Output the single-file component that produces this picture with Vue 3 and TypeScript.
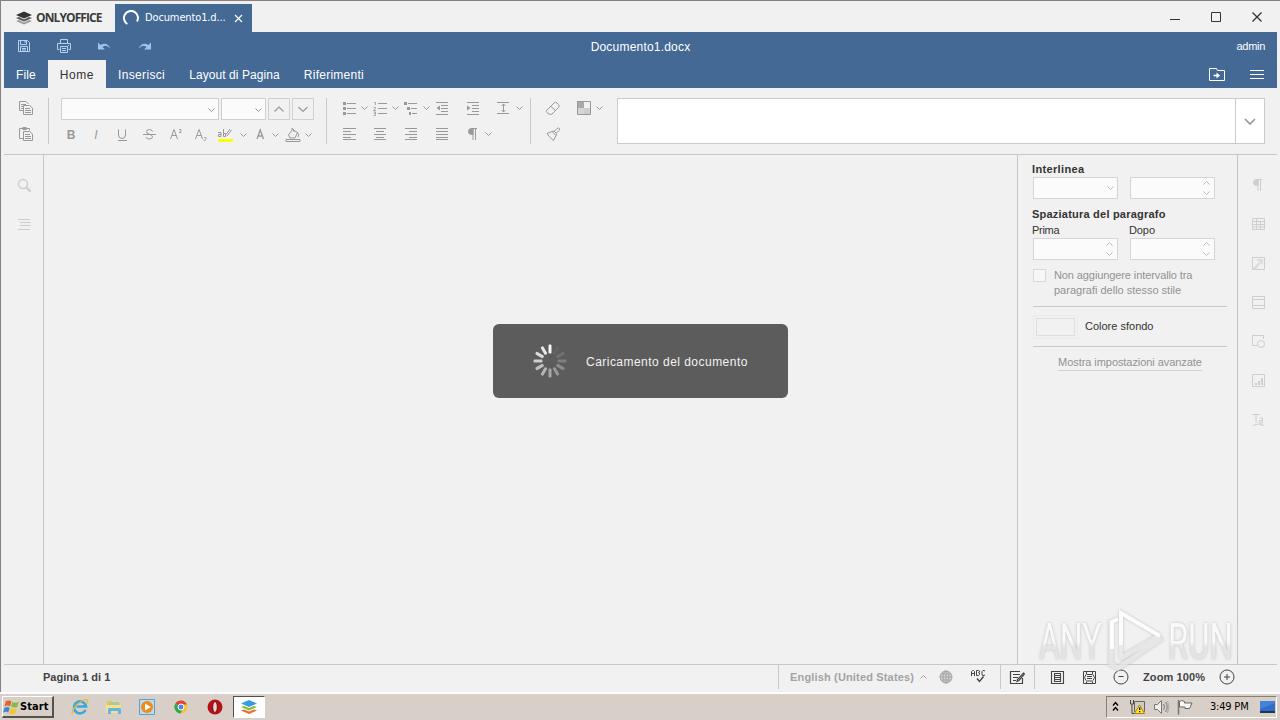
<script setup lang="ts">
import { h } from 'vue'

const lines = (y: number[], x1: number[], x2: number[]) =>
  y.map((v, i) => `<path d="M${x1[i]} ${v}.5H${x2[i]}"/>`).join('')

const icons: Record<string, string> = {
  copy: '<path d="M5.500 10.500H1.500V1.500H8l2.500 2.500M3 4.500h5M3 6.500h2M3 8.500h2"/><path d="M5.500 5.500h6l3 2.500v6.500h-9z" fill="#f1f1f1"/><path d="M7 8.500h5M7 10.500h6M7 12.500h6"/>',
  paste: '<path d="M5.500 12.500H1.500V2.500h10v2"/><path d="M4 2.500h5M4.500 1.500h4M4.500 3.500h4"/><path d="M5.500 5.500h6l3 2.500v6.500h-9z" fill="#f1f1f1"/><path d="M7 8.500h5M7 10.500h6M7 12.500h6"/>',
  bullets: lines([3, 8, 13], [6, 6, 6], [15, 15, 15]) + '<path d="M2 2h3v3H2zM2 7h3v3H2zM2 12h3v3H2z" fill="currentColor" stroke="none"/>',
  numbers: lines([3, 8, 13], [6, 6, 6], [15, 15, 15]) + '<g stroke-width=".8"><path d="M2 2.500h1.500V5M1.500 7.500H3.500v1L1.500 10.500H4M1.500 12h2v3.500h-2M2 13.500h1"/></g>',
  multi: lines([3, 8, 13], [5, 8, 9], [14, 14, 14]) + '<path d="M1 2h3v3H1zM4 7h3v3H4zM6 12h2v3H6z" fill="currentColor" stroke="none"/>',
  outdent: lines([2, 5, 8, 11, 14], [2, 7, 7, 7, 2], [14, 14, 14, 14, 14]) + '<path d="M6 5.500v5L2.500 8z" fill="currentColor" stroke="none"/>',
  indent: lines([2, 5, 8, 11, 14], [2, 7, 7, 7, 2], [14, 14, 14, 14, 14]) + '<path d="M2 5.500v5L5.500 8z" fill="currentColor" stroke="none"/>',
  spacing: '<path d="M2 2.500h12M2 13.500h12M8.500 4v8M6.500 6l2-2 2 2M6.500 10l2 2 2-2"/>',
  left: lines([2, 5, 8, 11, 13], [2, 2, 2, 2, 2], [15, 10, 15, 10, 15]),
  center: lines([2, 5, 8, 11, 13], [2, 4, 2, 4, 2], [14, 12, 14, 12, 14]),
  right: lines([2, 5, 8, 11, 13], [2, 6, 2, 6, 2], [14, 14, 14, 14, 14]),
  justify: lines([2, 5, 8, 11, 13], [2, 2, 2, 2, 2], [14, 14, 14, 14, 14]),
  para: '<path d="M8 3v11M10.500 3v11M6 2.500h6"/><path d="M8 2.500H6.500a3 3 0 0 0 0 6H8z" fill="currentColor"/>',
  eraser: '<path d="M1.500 10.500 9 3q1.500-1.500 3 0l1.500 1.500q1.500 1.500 0 3L7 14q-1.500 1-3 0l-2-1.500q-1-1-.5-2zM6 6.500l4.500 4"/>',
  pattern: '<path d="M1.500 1.500h13v13h-13z"/><path d="M1 1h7v7H1z" fill="currentColor" stroke="none" opacity=".8"/><path d="M8 8h6v6H8z" fill="currentColor" stroke="none" opacity=".4"/><path d="M2 8h6v6H2z" fill="currentColor" stroke="none" opacity=".3"/>',
  brush: '<path d="m2 7.500 5-2 4 4-2.500 5q-4-3-6.500-7zM7 5.500l2-.5 2.500 2.500-.5 2M9.500 5l2-2q2-2 3-.500t-1 2.500l-2 2"/>',
  under: '<path d="M4.500 2.500V8q0 3.500 3.500 3.500T11.500 8V2.500M4 13.500h9"/>',
  strike: '<path d="M11.500 4.500Q11 2.500 8.500 2.500 5.500 2.500 5.500 4.500 5.500 6.500 8 7q3.500 1 3.500 3 0 2-3.500 2-2.500 0-3-2M2 7.500h13"/>',
  sup: '<path d="m2.500 12 3.500-9.500L9.500 12M4 8.500h4.500"/><path d="M11 2.500h2v1.500l-2 1.500h2.500" stroke-width=".8"/>',
  sub: '<path d="m2.500 12 3.500-9.500L9.500 12M4 8.500h4.500"/><path d="M11 10.500h2v1.500l-1 1.500h-1.500" stroke-width=".8"/>',
  marker: '<path d="M2 5.500h3v4H2.500v-2H5M7.500 2v7.500h2v-3h-2M15.500 3 11 9M14 2l-4 5.500"/><path d="M2 12h15v3H2z" fill="#ff0" stroke="none"/>',
  fontA: '<path d="m5 12 3.200-9L11.500 12M6 9h4.500" stroke-width="1.300"/>',
  fill: '<path d="m3.500 8 4-5.500 5 3L10 11H5zM6 2q3-1.500 3 3M12 5q3 2 1 5"/><path d="M1 12.500h14v2H1z"/>',
  down: '<path d="m.5 1.500 3 3 3-3"/>',
  up: '<path d="m.5 4.500 3-3 3 3"/>',
  bigdown: '<path d="m1 1 5 5 5-5" stroke-width="1.700"/>',
  thindown: '<path d="m1.500 1 4.500 4.500L10.500 1" stroke-width="1.200"/>',
  thinup: '<path d="M1.500 5.500 6 1l4.500 4.500" stroke-width="1.200"/>',
  search: '<circle cx="7" cy="7" r="4.500" stroke-width="1.500"/><path d="m10.500 10.500 4 4" stroke-width="2.400"/>',
  nav: lines([3, 6, 9, 13], [2, 4, 4, 2], [14, 15, 15, 14]),
  save: '<path d="M2.500 2.500h9l2 2v9h-11zM4.500 2.500v4h6v-4M9 3v2M4.500 13V8.500h7V13M6 10.500h4M6 12h4"/>',
  print: '<path d="M4.500 5.500v-4h7v4M3.500 11.500h-2v-6h13v6h-2M4.500 8.500h7v6h-7zM6 10.500h4M6 12.500h4M12 7.500h1"/>',
  undo: '<path d="M2 4.500v7h7L6.500 9Q10 6 14.500 10.500 11 3.500 4.500 7z" fill="currentColor" stroke="none"/>',
  redo: '<path d="M15 4.500v7H8l2.500-2.500Q7 6 2.500 10.500 6 3.500 12.500 7z" fill="currentColor" stroke="none"/>',
  folder: '<path d="M1.500 2.500h7l1 2h7v10h-15z"/><path d="M5.500 9.500H9" stroke-width="1.600"/><path d="m8.500 6.500 3.500 3-3.500 3z" fill="currentColor" stroke="none"/>',
  menu: '<path d="M1 4.500h14M1 8.500h14M1 12.500h14"/>',
  table: '<path d="M2.500 2.500h12v11h-12zM3 5.500h11M3 8.500h11M3 11h11M6.500 3v10M10.500 6v7"/>',
  image: '<path d="M2.500 2.500h12v12h-12z"/><path d="m3 13 7-7H7V4h6v6l-2-2-5 6H3z" fill="currentColor" stroke="none" opacity=".6"/>',
  header: '<path d="M2.500 2.500h12v12h-12zM3 5.500h11M3 11.500h11"/>',
  shape: '<path d="M7 12.500H2.500v-10h11V6"/><circle cx="11" cy="11" r="3.500"/>',
  chart: '<path d="M2.500 2.500h12v12h-12z" /><path d="M5 11h2v2H5zM8 9h2v4H8zM11 6h2v7h-2z" fill="currentColor" stroke="none"/>',
  textart: '<path d="M2 3.500h8M6 4v8M9.500 7h3v5h-3V9.500h3M3 14.500q5-3 11 0"/>',
  globe: '<circle cx="8" cy="8" r="6" fill="currentColor" fill-opacity=".35"/><ellipse cx="8" cy="8" rx="3" ry="6"/><path d="M8 2v12M2 8h12M3 5h10M3 11h10"/>',
  spell: '<path d="M1.500 7V2.500l1-1h1l1 1V7M2 4.500h2M6.500 1.500v5h2l1-1V4l-1-.5 1-.5V2l-1-.500zM15 2l-1-.5h-1l-1 1V6l1 .5h1L15 6" stroke-width="1"/><path d="m7 9.500 2.500 3 4-5" stroke-width="1.400"/>',
  track: '<path d="M11 2.500H1.500v12h12V9M4 5.500h7M4 8.500h5M4 11.500h3M14.500 4l1 1L10 11.500l-2 1 .5-2z" stroke-width="1.200"/>',
  page: '<path d="M2.500 2.500h12v12h-12zM5.500 4.500h6v8h-6zM6 6.500h5M6 8.500h5M6 10.500h5" stroke-width="1.100"/>',
  width: '<path d="M2.500 2.500h12v12h-12zM5.500 5V2.500M11.500 5V2.500M5.500 15v-2.500M11.500 15v-2.500M5.500 5.500h6M5.500 12h6M6 7.500h5M6 9.500h5M5 5.500l-1.500 3 1.500 3M12 5.500l1.500 3-1.500 3" stroke-width="1"/>',
  minus: '<circle cx="8" cy="8" r="7"/><path d="M5.500 7.500h5"/>',
  plus: '<circle cx="8" cy="8" r="7"/><path d="M5 8h6M8 5v6"/>',
  logo: '<path d="m0 5 8-3.500 8 3.500-8 3.500z" fill="#333" stroke="none"/><path d="m0 8 3-1 5 2.500 5-2.500 3 1-8 3.500z" fill="#555" stroke="none"/><path d="m0 11 3-1 5 2.500 5-2.500 3 1-8 3.500z" fill="#999" stroke="none"/>',
  office: '<path d="m0 11.500 3-1 5 2 5-2 3 1-8 3.500z" fill="#f06a2c" stroke="none"/><path d="m0 8 3-1 5 2 5-2 3 1-8 3.500z" fill="#7fc03a" stroke="none"/><path d="m0 4.500L8 1l8 3.500L8 8z" fill="#3a9be2" stroke="none"/>',
  ring: '<path d="M4.400 14A7 7 0 1 1 14 11.500" stroke-width="2"/>',
  close: '<path d="m1 1 7 7M8 1 1 8" stroke-width="1.200"/>',
}

const Ico = (p: { n: string; w?: number; h?: number }) => {
  const w = p.w ?? 16
  const ht = p.h ?? 16
  return h('svg', { width: w, height: ht, viewBox: `0 0 ${w} ${ht}`, fill: 'none', stroke: 'currentColor', innerHTML: icons[p.n] })
}
Ico.props = ['n', 'w', 'h']

const tabs = ['File', 'Home', 'Inserisci', 'Layout di Pagina', 'Riferimenti']
const sideIcons = ['para', 'table', 'image', 'header', 'shape', 'chart', 'textart']
const spokes = Array.from({ length: 12 }, (_, i) => ({ angle: -i * 30, opacity: Math.max(0.04, 0.95 - i * 0.082) }))
</script>

<template>
  <div class="screen">
    <div class="window">
      <header class="titlebar">
        <div class="brand"><Ico n="logo" /><span>ONLYOFFICE</span></div>
        <div class="doctab"><Ico n="ring" /><span>Documento1.d...</span><Ico n="close" :w="9" :h="9" /></div>
        <svg class="winbtns" width="98" height="16" viewBox="0 0 98 16" fill="none" stroke="#333">
          <path d="M0 10.500h10" /><path d="M41.500 3.500h9v9h-9z" /><path d="m82.500 3.500 9 9m0-9-9 9" stroke-width="1.300" />
        </svg>
      </header>
      <div class="blue">
        <div class="quick">
          <div class="quickicons"><Ico n="save" /><Ico n="print" /><Ico n="undo" /><Ico n="redo" /></div>
          <span class="docname">Documento1.docx</span>
          <span class="admin">admin</span>
        </div>
        <nav class="tabs">
          <span v-for="t in tabs" :key="t" :class="{ active: t === 'Home' }">{{ t }}</span>
          <div class="tabtools"><Ico n="folder" :w="18" /><Ico n="menu" /></div>
        </nav>
      </div>
      <div class="toolbar">
        <div class="clip"><Ico n="copy" /><Ico n="paste" /></div>
        <i class="sep"></i>
        <div class="fontgroup">
          <div class="fontrow">
            <div class="combo name"><Ico n="down" :w="7" :h="6" /></div>
            <div class="combo size"><Ico n="down" :w="7" :h="6" /></div>
            <div class="sq"><Ico n="thinup" :w="12" :h="7" /></div>
            <div class="sq"><Ico n="thindown" :w="12" :h="7" /></div>
          </div>
          <div class="formatrow">
            <b class="glyph">B</b><em class="glyph">I</em><Ico n="under" /><Ico n="strike" /><Ico n="sup" /><Ico n="sub" />
            <Ico n="marker" :w="18" /><Ico n="down" :w="7" :h="6" /><Ico n="fontA" /><Ico n="down" :w="7" :h="6" /><Ico n="fill" /><Ico n="down" :w="7" :h="6" />
          </div>
        </div>
        <i class="sep"></i>
        <div class="paragroup">
          <div class="listrow">
            <Ico n="bullets" /><Ico n="down" :w="7" :h="6" /><Ico n="numbers" /><Ico n="down" :w="7" :h="6" /><Ico n="multi" /><Ico n="down" :w="7" :h="6" />
            <Ico n="outdent" /><Ico n="indent" /><Ico n="spacing" /><Ico n="down" :w="7" :h="6" />
          </div>
          <div class="alignrow">
            <Ico n="left" /><Ico n="center" /><Ico n="right" /><Ico n="justify" /><Ico n="para" /><Ico n="down" :w="7" :h="6" />
          </div>
        </div>
        <i class="sep"></i>
        <div class="clear">
          <Ico n="eraser" /><Ico n="pattern" /><Ico n="down" :w="7" :h="6" /><Ico n="brush" />
        </div>
        <div class="gallery"><div class="more"><Ico n="bigdown" :w="12" :h="7" /></div></div>
      </div>
      <main class="body">
        <aside class="leftbar"><Ico n="search" /><Ico n="nav" /></aside>
        <section class="canvas">
          <div class="loader">
            <svg width="34" height="34" viewBox="-17 -17 34 34">
              <rect v-for="s in spokes" :key="s.angle" x="-1.500" y="-16.500" width="3" height="9" rx="1.200" fill="#fff" :opacity="s.opacity" :transform="`rotate(${s.angle})`" />
            </svg>
            <span>Caricamento del documento</span>
          </div>
        </section>
        <aside class="settings">
          <h4 class="first">Interlinea</h4>
          <div class="pair">
            <div class="field"><Ico n="down" :w="7" :h="6" /></div>
            <div class="field spin"><Ico n="up" :w="7" :h="6" /><Ico n="down" :w="7" :h="6" /></div>
          </div>
          <h4 class="second">Spaziatura del paragrafo</h4>
          <div class="labels"><span>Prima</span><span>Dopo</span></div>
          <div class="pair">
            <div class="field spin"><Ico n="up" :w="7" :h="6" /><Ico n="down" :w="7" :h="6" /></div>
            <div class="field spin"><Ico n="up" :w="7" :h="6" /><Ico n="down" :w="7" :h="6" /></div>
          </div>
          <div class="check"><i></i><p><span>Non aggiungere intervallo tra</span><br /><span>paragrafi dello stesso stile</span></p></div>
          <div class="color"><div class="swatch"><i></i></div><span>Colore sfondo</span></div>
          <div class="advanced"><span>Mostra impostazioni avanzate</span></div>
        </aside>
        <aside class="rightbar"><Ico v-for="s in sideIcons" :key="s" :n="s" /></aside>
      </main>
      <footer class="status">
        <span class="pages">Pagina 1 di 1</span>
        <div class="lang"><span>English (United States)</span><Ico n="up" :w="7" :h="6" /><Ico n="globe" /><Ico n="spell" /></div>
        <div class="zoom"><Ico n="track" /><i></i><Ico n="page" /><Ico n="width" /><Ico n="minus" /><span>Zoom 100%</span><Ico n="plus" /></div>
      </footer>
    </div>

    <div class="taskbar">
      <div class="start">
        <svg width="18" height="18" viewBox="0 0 18 18">
          <path d="M3 3q3-2 6 0L7.500 8.500q-3-2-6 0z" fill="#e8632c" /><path d="M10 3.500q3 2 7 0L15 9q-3 1.500-6.500-.5z" fill="#8bbd3d" />
          <path d="M1.500 10q3-2 5.500 0L5.500 15q-2-2-5.500 0z" fill="#3c87d0" /><path d="M8 10.500q3 2 6.500 0L13 16q-3 1.500-6.500-.5z" fill="#f3c52c" />
        </svg>
        <span>Start</span>
      </div>
      <div class="launch">
        <svg width="18" height="18" viewBox="0 0 18 18" fill="none">
          <path d="M14.500 12A6 6 0 1 1 15 8.500H5.500" stroke="#3ba7df" stroke-width="2.600" /><path d="M2 16Q-1 14 6 7t10.500-5q1 1-1 4" stroke="#e7b93c" stroke-width="1.300" />
        </svg>
        <svg width="18" height="18" viewBox="0 0 18 18">
          <path d="M2 3h5l1 2h7v10H2z" fill="#e9c65b" /><path d="M4 4h10v3H4z" fill="#a9cf8d" /><path d="M1 7h15v8H1z" fill="#f7df8d" /><path d="M3 16v-5q0-1 1-1h11q1 0 1 1v5h-3v-3H6v3z" fill="#63b7e8" />
        </svg>
        <svg width="18" height="18" viewBox="0 0 18 18">
          <path d="M1.500 1.500h15v15h-15z" fill="#b7dcf6" stroke="#5c9fd3" /><circle cx="9" cy="9" r="6" fill="#f18a16" /><path d="m7 5.500 6 3.500-6 3.500z" fill="#fff" />
        </svg>
        <svg width="18" height="18" viewBox="0 0 18 18">
          <circle cx="9" cy="9" r="6.500" fill="#f6c528" /><path d="M9 9 3.200 5.700A6.600 6.600 0 0 1 15 6.500H9z" fill="#e34334" /><path d="M3.200 5.700A6.600 6.600 0 0 0 8.500 15.500L11 10z" fill="#31a553" /><circle cx="9" cy="9" r="3" fill="#4789ed" stroke="#fff" />
        </svg>
        <svg width="18" height="18" viewBox="0 0 18 18">
          <circle cx="9" cy="9" r="7.500" fill="#b51218" /><ellipse cx="9" cy="9" rx="2.300" ry="5.500" fill="#e9d8d4" stroke="#7e090d" />
        </svg>
      </div>
      <div class="running"><Ico n="office" /></div>
      <div class="tray">
        <svg class="arrows" width="8" height="12" viewBox="0 0 8 12" fill="none" stroke="#000" stroke-width="1.300"><path d="m1 4.500 2.500-3 2.500 3M1 9.500l2.500-3 2.500 3" /></svg>
        <svg width="18" height="16" viewBox="0 0 18 16">
          <path d="M5.500 2.500h10v10h-10z" fill="#cfcbc2" stroke="#666" /><path d="M1.500 1v4h3V1M3 5v9.500h6" fill="none" stroke="#444" /><path d="m10.500 6 5 8.500h-10z" fill="#ffe23b" stroke="#a98700" /><path d="M10 8.500h1.300v2.500H10zM10 12h1.300v1.300H10z" fill="#111" />
        </svg>
        <svg width="18" height="16" viewBox="0 0 18 16" fill="none" stroke="#777">
          <path d="M1.500 5.500h3l4-4v13l-4-4h-3z" fill="#eee" /><path d="M10.500 5q2 3 0 6M12.500 3q3.500 5 0 10" /><path d="M14.500 2q3 6 0 12" stroke="#aaa" />
        </svg>
        <svg width="18" height="16" viewBox="0 0 18 16" stroke="#666"><path d="M2.500 2.500q2-2 5 0V4h7.500l-2.500 5.500H8V8H2.500z" fill="#f8f8f8" /><path d="M1.500 1v14.500" stroke="#777" stroke-width="1.500" /></svg>
        <span>3:49 PM</span>
        <svg class="desk" width="17" height="16" viewBox="0 0 17 16"><path d="M1 2h15v10H1z" fill="#2f6fc8" /><path d="M1 2h15v2L1 10z" fill="#4583d6" /><path d="M1 12h15v2H1z" fill="#24354e" /></svg>
      </div>
    </div>

    <svg class="watermark" width="230" height="76" viewBox="0 0 230 76">
      <defs>
        <linearGradient id="wm" x1="0" y1="0" x2="0" y2="1"><stop offset=".5" stop-color="#fbfbfb" /><stop offset=".6" stop-color="#e2e2e2" /></linearGradient>
      </defs>
      <g class="mark">
        <text transform="translate(9 56) scale(.64 1)">ANY</text>
        <text transform="translate(138 56) scale(.655 1)">RUN</text>
        <path d="M81 17v44l7 4 44-30M91 55l38-22" fill="none" stroke="#e4e4e4" stroke-width="5" />
        <path d="M91 10v46" fill="none" stroke="#e8e8e8" stroke-width="4" />
        <path d="M82 46V19l6-3M91 42V10l39 23" fill="none" stroke="#fff" stroke-width="4" />
      </g>
    </svg>
  </div>
</template>

<style>
html, body { margin: 0; overflow: hidden; background: #f1f1f1; }
</style>

<style scoped>
* { box-sizing: border-box; }
svg { display: block; flex: none; }
.screen { width: 1280px; height: 720px; position: relative; display: flex; flex-direction: column; background: #f1f1f1; font: 12px/14px "Liberation Sans", Arial, sans-serif; color: #444; white-space: nowrap; }
.window { height: 692px; flex: none; border-top: 1px solid #858183; border-left: 1px solid #858183; padding: 3px 3px 0; display: flex; flex-direction: column; }
.titlebar { height: 28px; flex: none; display: flex; }
.brand { width: 111px; padding-left: 12px; display: flex; align-items: center; gap: 4px; color: #3b3b3b; font: bold 12px/16px "Open Sans", sans-serif; letter-spacing: -.9px; }
.doctab { width: 137px; background: #446995; color: #fff; display: flex; align-items: center; padding: 0 9px 0 8px; font: 11px/16px "DejaVu Sans Condensed", "DejaVu Sans", sans-serif; letter-spacing: -.13px; }
.doctab span { width: 88px; margin-left: 6px; margin-right: 1px; }
.winbtns { margin: 5px 9px 0 auto; }
.blue { height: 56px; flex: none; background: #446995; color: #fff; }
.quick { height: 28px; display: grid; grid-template-columns: 1fr auto 1fr; align-items: center; }
.quickicons { display: flex; gap: 24px; padding-left: 12px; color: #b6d2f0; }
.quickicons svg:nth-child(n+3) { color: #9fc4ea; }
.docname { letter-spacing: .2px; margin-top: 2px; }
.admin { font-size: 11px; justify-self: end; margin-right: 12px; letter-spacing: -.3px; }
.tabs { height: 28px; display: flex; line-height: 30px; letter-spacing: .35px; }
.tabs > span { padding: 0 12px; height: 28px; }
.tabs > span:nth-child(1) { letter-spacing: .1px; }
.tabs > span:nth-child(2) { letter-spacing: .55px; }
.tabs > span:nth-child(4) { letter-spacing: .08px; }
.tabs > span:nth-child(5) { letter-spacing: .25px; }
.tabs > .active { background: #f1f1f1; color: #333; }
.tabtools { margin-left: auto; display: flex; align-items: center; gap: 23px; padding-right: 12px; }
.toolbar { height: 67px; flex: none; display: flex; align-items: flex-start; padding: 10px 12px 0 14px; border-bottom: 1px solid #c5c5c5; color: #999; }
.clip { display: grid; gap: 10px; padding-top: 2px; width: 30px; }
.sep { width: 1px; height: 46px; background: #c8c8c8; }
.fontgroup { width: 277px; padding-left: 12px; }
.fontrow { display: flex; height: 22px; }
.combo { height: 22px; border: 1px solid #d0d0d0; background: #fbfbfb; display: flex; justify-content: flex-end; align-items: center; padding: 2px 3px 0 0; }
.name { width: 158px; margin-right: 2px; }
.size { width: 45px; margin-right: 2px; }
.sq { width: 22px; height: 22px; border: 1px solid #d0d0d0; margin-right: 2px; display: grid; place-items: center; }
.formatrow, .listrow, .alignrow { display: grid; align-items: center; height: 16px; }
.formatrow { grid-template-columns: 25px 26px 27px 27px 25px 23px 24px 12px 20px 13px 20px 7px; margin: 6px 0 0 2px; }
.formatrow > :nth-child(n+2) { margin-top: 1px; }
.glyph { font-size: 12px; width: 16px; text-align: center; }
.paragroup { width: 203px; padding: 2px 0 0 14px; }
.listrow { grid-template-columns: 20px 11px 20px 11px 20px 11px 31px 30px 21px 7px; }
.alignrow { grid-template-columns: 31px 31px 31px 31px 20px 7px; margin-top: 10px; }
.clear { display: grid; grid-template-columns: 31px 20px 7px; row-gap: 10px; align-items: center; padding: 2px 0 0 14px; width: 86px; }
.gallery { flex: 1; height: 46px; border: 1px solid #cbcbcb; background: #fff; display: flex; justify-content: flex-end; }
.more { width: 29px; border-left: 1px solid #cbcbcb; display: grid; place-items: center; }
.body { flex: 1; min-height: 0; display: flex; }
.leftbar { width: 40px; border-right: 1px solid #c5c5c5; display: flex; flex-direction: column; gap: 23px; align-items: center; padding: 22px 0 0 1px; color: #cecece; }
.canvas { width: 973px; display: flex; justify-content: center; padding: 169px 0 0 220px; }
.loader { width: 295px; height: 74px; flex: none; border-radius: 6px; background: #5c5c5c; color: #f2f2f2; display: flex; align-items: center; gap: 19.500px; padding-left: 39.500px; letter-spacing: .47px; }
.loader span { padding-top: 2px; }
.settings { width: 220px; border-left: 1px solid #c5c5c5; padding: 7px 10px 0 14px; font-size: 11px; line-height: 15px; color: #333; flex: none; }
h4 { margin: 0; font-size: 11px; line-height: 15px; letter-spacing: .22px; }
.first { letter-spacing: .35px; }
.pair { display: grid; grid-template-columns: 85px 85px; column-gap: 12px; padding-left: 1px; }
.field { height: 22px; border: 1px solid #d5d5d5; background: #fbfbfb; color: #bababa; display: flex; justify-content: flex-end; align-items: center; padding-right: 3px; }
.spin { flex-direction: column; justify-content: center; align-items: flex-end; gap: 4px; padding-right: 4px; }
.second { margin-top: 8px; }
.labels { margin-top: 1px; display: grid; grid-template-columns: 97px auto; letter-spacing: -.3px; }
.labels span:last-child { letter-spacing: -.1px; }
.check { display: flex; margin: 8px 0 0 1px; color: #929292; padding-bottom: 8px; border-bottom: 1px solid #c8c8c8; }
.check i { width: 13px; height: 13px; margin: 1px 8px 0 0; border: 1px solid #d8d8d8; background: #f7f7f7; }
.check p { margin: 0; }
.check p span:first-child { letter-spacing: -.1px; }
.color { height: 40px; margin-left: 1px; display: flex; align-items: center; gap: 7px; border-bottom: 1px solid #c8c8c8; }
.swatch { width: 45px; height: 24px; padding: 2px; border: 1px solid #ebebeb; }
.swatch i { display: block; height: 100%; border: 1px solid #dedede; }
.advanced { text-align: center; padding: 8px 0 0 1px; color: #929292; letter-spacing: -.06px; }
.advanced span { display: inline-block; border-bottom: 1px solid #d2d2d2; }
.rightbar { width: 40px; flex: none; border-left: 1px solid #c5c5c5; display: flex; flex-direction: column; gap: 23px; align-items: center; padding-top: 22px; color: #cecece; }
.status { height: 28px; flex: none; border-top: 1px solid #c8c8c8; display: flex; align-items: center; font-size: 11px; font-weight: bold; padding: 0 0 3px 39px; }
.pages { flex: 1; }
.lang { width: 223px; height: 24px; border-left: 1px solid #c8c8c8; border-right: 1px solid #c8c8c8; padding-left: 11px; display: flex; align-items: center; color: #a3a3a3; letter-spacing: .16px; }
.lang svg:nth-of-type(1) { margin-left: 6px; }
.lang svg:nth-of-type(2) { margin-left: 11px; }
.lang svg:nth-of-type(3) { margin-left: 16px; color: #444; }
.zoom { width: 276px; height: 24px; display: flex; align-items: center; padding-left: 8px; color: #444; }
.zoom i { width: 1px; height: 24px; background: #c8c8c8; margin: 0 14px 0 9px; }
.zoom svg:nth-of-type(3), .zoom svg:nth-of-type(4) { margin-left: 16px; }
.zoom span { margin: 0 14px; letter-spacing: .1px; }
.taskbar { height: 28px; flex: none; border-top: 2px solid #fff; background: #d8d0c8; display: flex; align-items: center; padding: 0 3px 0 2px; }
.start { width: 52px; height: 22px; border: 1px solid #fff; border-right: 2px solid #55514c; border-bottom: 2px solid #55514c; display: flex; align-items: center; color: #000; font: bold 11px/16px "DejaVu Sans Condensed", sans-serif; letter-spacing: .1px; }
.start svg { width: 17px; }
.launch { display: flex; gap: 15.700px; margin-left: 17px; }
.running { width: 32px; height: 22px; margin-left: 9px; background: #fdfdfd; border: 1px solid #55514c; border-right-color: #fff; border-bottom-color: #fff; display: grid; place-items: center; }
.tray { margin-left: auto; width: 171px; height: 22px; border: 1px solid #858078; border-right-color: #fff; border-bottom-color: #fff; display: flex; align-items: center; gap: 6px; padding: 0 0 0 5px; color: #000; font: 11px/14px "DejaVu Sans Condensed", sans-serif; letter-spacing: -.2px; }
.arrows { margin-right: 3px; }
.tray span { margin-left: 9px; width: 40px; }
.desk { margin-left: 4px; }
.watermark { position: absolute; left: 1030px; top: 603px; }
.mark { filter: drop-shadow(0 0 1.500px #b4b4b4); font: 50px Roboto, sans-serif; fill: url(#wm); opacity: .8; }
</style>
